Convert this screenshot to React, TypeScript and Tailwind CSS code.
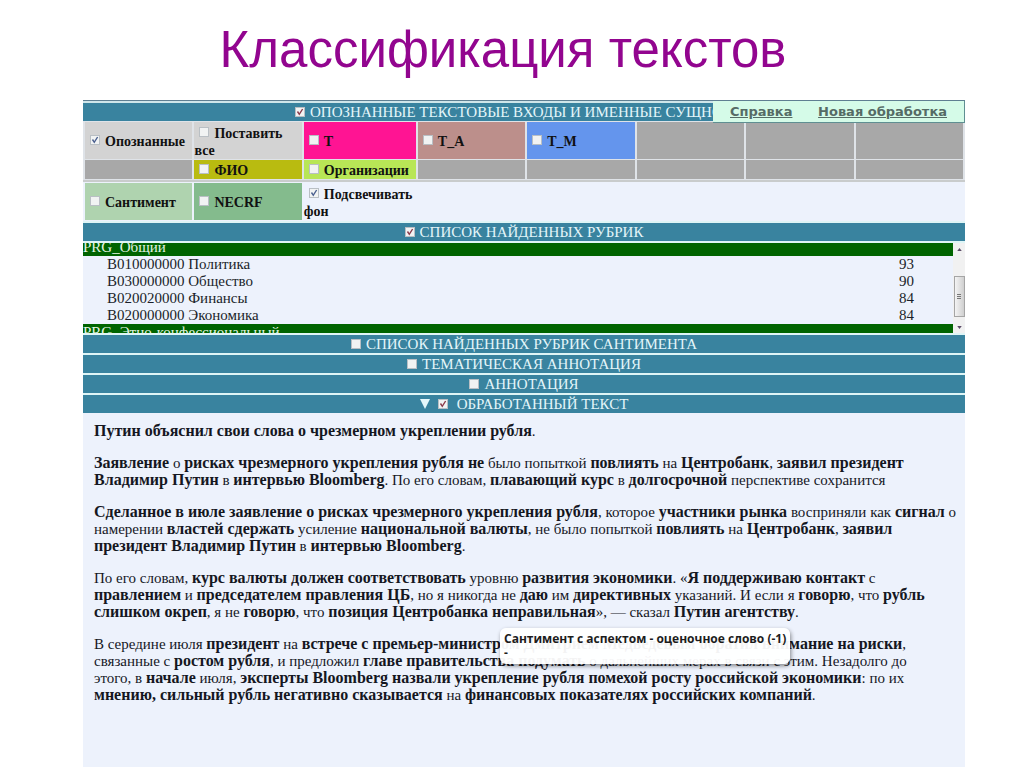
import React from 'react';

interface TickBoxProps {
  checked?: boolean;
  tick?: string;
  className?: string;
}

const TickBox: React.FC<TickBoxProps> = ({ checked = false, tick = 'text-[#4a5f8f]', className = '' }) => (
  <span className={`inline-grid h-[10px] w-[10px] ${className}`}>
    <input
      type="checkbox"
      defaultChecked={checked}
      className="peer col-start-1 row-start-1 h-[10px] w-[10px] appearance-none border border-[#b9bfc4] bg-[#f1f3f3]"
    />
    <svg
      viewBox="0 0 10 10"
      className={`pointer-events-none col-start-1 row-start-1 hidden h-[10px] w-[10px] peer-checked:block ${tick}`}
      fill="none"
      stroke="currentColor"
      strokeWidth="1.4"
    >
      <path d="M2.5 4.5 L4.3 7.3 L7.6 2" />
    </svg>
  </span>
);

interface BarProps {
  title: string;
  checked?: boolean;
  arrow?: boolean;
}

const Bar: React.FC<BarProps> = ({ title, checked, arrow }) => (
  <h2 className="flex h-[18px] items-center justify-center overflow-hidden whitespace-nowrap bg-[#39839f] text-[15px] leading-[18px] text-[#e4f6fa]">
    {arrow && (
      <button type="button" aria-label="Свернуть" className="mr-2">
        <svg viewBox="0 0 10 10" className="h-[10px] w-[10px]" fill="currentColor">
          <path d="M0 0 H10 L5 10 Z" />
        </svg>
      </button>
    )}
    <label className="flex items-center">
      <TickBox checked={checked} tick="text-[#8a3a4a]" className={arrow ? 'mr-[9px]' : 'mr-[5px]'} />
      {title}
    </label>
  </h2>
);

interface Cell {
  label?: string;
  color: string;
  checked?: boolean;
}

const GREY = 'bg-[#a8a8a8]';

const topRows: Cell[][] = [
  [
    { label: 'Опознанные', color: 'bg-[#d3d3d3]', checked: true },
    { label: 'Поставить все', color: 'bg-[#d3d3d3]' },
    { label: 'T', color: 'bg-[#ff1493]' },
    { label: 'T_A', color: 'bg-[#bc8f8b]' },
    { label: 'T_M', color: 'bg-[#6495ed]' },
    { color: GREY },
    { color: GREY },
    { color: GREY },
  ],
  [
    { color: GREY },
    { label: 'ФИО', color: 'bg-[#b9bb10]' },
    { label: 'Организации', color: 'bg-[#b8e656]' },
    { color: GREY },
    { color: GREY },
    { color: GREY },
    { color: GREY },
    { color: GREY },
  ],
];

const bottomRows: Cell[][] = [
  [
    { label: 'Сантимент', color: 'bg-[#afd3af]' },
    { label: 'NECRF', color: 'bg-[#84bb8d]' },
    { label: 'Подсвечивать фон', color: '', checked: true },
    { color: '' },
    { color: '' },
    { color: '' },
    { color: '' },
    { color: '' },
  ],
];

const heights = ['h-[37px]', 'h-[19px]'];

const TagTable: React.FC<{ rows: Cell[][]; className: string }> = ({ rows, className }) => (
  <table className={`w-full table-fixed border-separate border-spacing-x-[2px] border-spacing-y-[1px] ${className}`}>
    <colgroup>
      <col />
      <col />
      <col className="w-[112px]" />
      <col />
      <col />
      <col />
      <col />
      <col />
    </colgroup>
    <tbody>
      {rows.map((row, r) => (
        <tr key={r} className={heights[r]}>
          {row.map((cell, c) => (
            <td key={c} className={`p-0 pt-[2px] align-middle text-[14px] font-bold leading-[17px] text-[#111] ${cell.color}`}>
              {cell.label && (
                <label>
                  <TickBox checked={cell.checked} className="ml-[5px] mr-[5px] align-[1px]" />
                  {cell.label}
                </label>
              )}
            </td>
          ))}
        </tr>
      ))}
    </tbody>
  </table>
);

const rubrics = [
  { name: 'B010000000 Политика', weight: 93 },
  { name: 'B030000000 Общество', weight: 90 },
  { name: 'B020020000 Финансы', weight: 84 },
  { name: 'B020000000 Экономика', weight: 84 },
];

const RubricList: React.FC = () => (
  <div className="flex h-[90px] overflow-hidden text-[15px] leading-[17px]">
    <div className="flex-1">
      <table className="-mt-1 w-full border-collapse text-[#1b1f2a]">
        <tbody>
          <tr className="bg-[#006400] text-[#e6f5e6]">
            <td colSpan={2} className="p-0">PRG_Общий</td>
          </tr>
          {rubrics.map((item) => (
            <tr key={item.name}>
              <td className="p-0 pl-6">{item.name}</td>
              <td className="w-[54px] p-0">{item.weight}</td>
            </tr>
          ))}
          <tr className="bg-[#006400] text-[#e6f5e6]">
            <td colSpan={2} className="p-0">PRG_Этно-конфессиональный</td>
          </tr>
        </tbody>
      </table>
    </div>
    <div className="flex w-3 flex-col items-center bg-[#f1f1f1]">
      <button type="button" aria-label="Вверх" className="flex h-3 items-center">
        <svg viewBox="0 0 6 4" className="h-[3px] w-[5px] fill-[#5a4a66]">
          <path d="M0 4 L3 0 L6 4 Z" />
        </svg>
      </button>
      <div className="flex-1" />
      <div className="flex h-[41px] w-[11px] flex-col items-center justify-center gap-px border border-[#a5a5a5] bg-linear-to-r from-[#f4f4f4] to-[#cfcfcf]">
        <span className="h-px w-1 bg-[#777]" />
        <span className="h-px w-1 bg-[#777]" />
        <span className="h-px w-1 bg-[#777]" />
      </div>
      <button type="button" aria-label="Вниз" className="mt-1 flex h-3 items-center">
        <svg viewBox="0 0 6 4" className="h-[3px] w-[5px] fill-[#5a4a66]">
          <path d="M0 0 L3 4 L6 0 Z" />
        </svg>
      </button>
    </div>
  </div>
);

const Article: React.FC = () => (
  <article className="relative flex flex-1 flex-col gap-[15px] whitespace-nowrap px-[11px] pb-4 pt-[10px] text-[15px] leading-[17px] text-[#15171f] [&_b]:text-[16px] [&_b]:leading-[16px]">
    <p>
      <b>Путин объяснил свои слова о чрезмерном укреплении рубля</b>.
    </p>
    <p>
      <b>Заявление</b> о <b>рисках чрезмерного укрепления рубля не</b> было попыткой <b>повлиять</b> на <b>Центробанк</b>, <b>заявил президент</b>
      <br />
      <b>Владимир Путин</b> в <b>интервью Bloomberg</b>. По его словам, <b>плавающий курс</b> в <b>долгосрочной</b> перспективе сохранится
    </p>
    <p>
      <b>Сделанное в июле заявление о рисках чрезмерного укрепления рубля</b>, которое <b>участники рынка</b> восприняли как <b>сигнал</b> о
      <br />
      намерении <b>властей сдержать</b> усиление <b>национальной валюты</b>, не было попыткой <b>повлиять</b> на <b>Центробанк</b>, <b>заявил</b>
      <br />
      <b>президент Владимир Путин</b> в <b>интервью Bloomberg</b>.
    </p>
    <p>
      По его словам, <b>курс валюты должен соответствовать</b> уровню <b>развития экономики</b>. «<b>Я поддерживаю контакт</b> с
      <br />
      <b>правлением</b> и <b>председателем правления ЦБ</b>, но я никогда не <b>даю</b> им <b>директивных</b> указаний. И если я <b>говорю</b>, что <b>рубль</b>
      <br />
      <b>слишком окреп</b>, я не <b>говорю</b>, что <b>позиция Центробанка неправильная</b>», — сказал <b>Путин агентству</b>.
    </p>
    <p>
      В середине июля <b>президент</b> на <b>встрече с премьер-министром Дмитрием Медведевым обратил внимание на риски</b>,
      <br />
      связанные с <b>ростом рубля</b>, и предложил <b>главе правительства подумать</b> о дальнейших мерах в связи с этим. Незадолго до
      <br />
      этого, в <b>начале</b> июля, <b>эксперты Bloomberg назвали укрепление рубля помехой росту российской экономики</b>: по их
      <br />
      <b>мнению, сильный рубль негативно сказывается</b> на <b>финансовых показателях российских компаний</b>.
    </p>
    <div
      role="tooltip"
      className="absolute left-[417px] top-[215px] h-9 rounded-md bg-white/95 px-1 pt-1 font-['Open_Sans',sans-serif] text-[12px] font-bold leading-[14px] text-[#1c1c1c] shadow-[1px_2px_4px_rgba(0,0,0,0.45)]"
    >
      Сантимент с аспектом - оценочное слово (-1)
      <br />-
    </div>
  </article>
);

const App: React.FC = () => {
  return (
    <div className="flex min-h-screen flex-col bg-white font-['Liberation_Serif',serif]">
      <h1 className="h-[100px] pr-[18px] text-center font-['Liberation_Sans',sans-serif] text-[51px] leading-[100px] text-[#92058f]">
        Классификация текстов
      </h1>
      <main className="ml-[83px] mr-[59px] flex flex-1 flex-col bg-[#edf2fc]">
        {/* Шапка со ссылками поверх заголовка */}
        <div className="relative border-t border-[#5f7f92] bg-[#cfe6ea] pt-[2px]">
          <Bar title="ОПОЗНАННЫЕ ТЕКСТОВЫЕ ВХОДЫ И ИМЕННЫЕ СУЩНОСТИ" checked />
          <nav className="absolute right-0 top-0 flex h-[22px] w-[252px] items-center justify-between border-b border-r border-[#5f8f92] bg-[#d5fbe8] px-[17px] font-['DejaVu_Sans',sans-serif] text-[13px] font-bold text-[#556b66]">
            <a href="#help" className="underline">Справка</a>
            <a href="#new" className="underline">Новая обработка</a>
          </nav>
        </div>
        <TagTable rows={topRows} className="bg-[#dfe3e8]" />
        <TagTable rows={bottomRows} className="border-t-2 border-[#c9cccc]" />

        <div className="flex flex-col gap-[2px] bg-[#dff5f6] pt-[2px]">
          <Bar title="СПИСОК НАЙДЕННЫХ РУБРИК" checked />
          <div className="bg-[#edf2fc]">
            <RubricList />
          </div>
          <Bar title="СПИСОК НАЙДЕННЫХ РУБРИК САНТИМЕНТА" />
          <Bar title="ТЕМАТИЧЕСКАЯ АННОТАЦИЯ" />
          <Bar title="АННОТАЦИЯ" />
          <Bar title="ОБРАБОТАННЫЙ ТЕКСТ" checked arrow />
        </div>
        <Article />
      </main>
    </div>
  );
};

export default App;
